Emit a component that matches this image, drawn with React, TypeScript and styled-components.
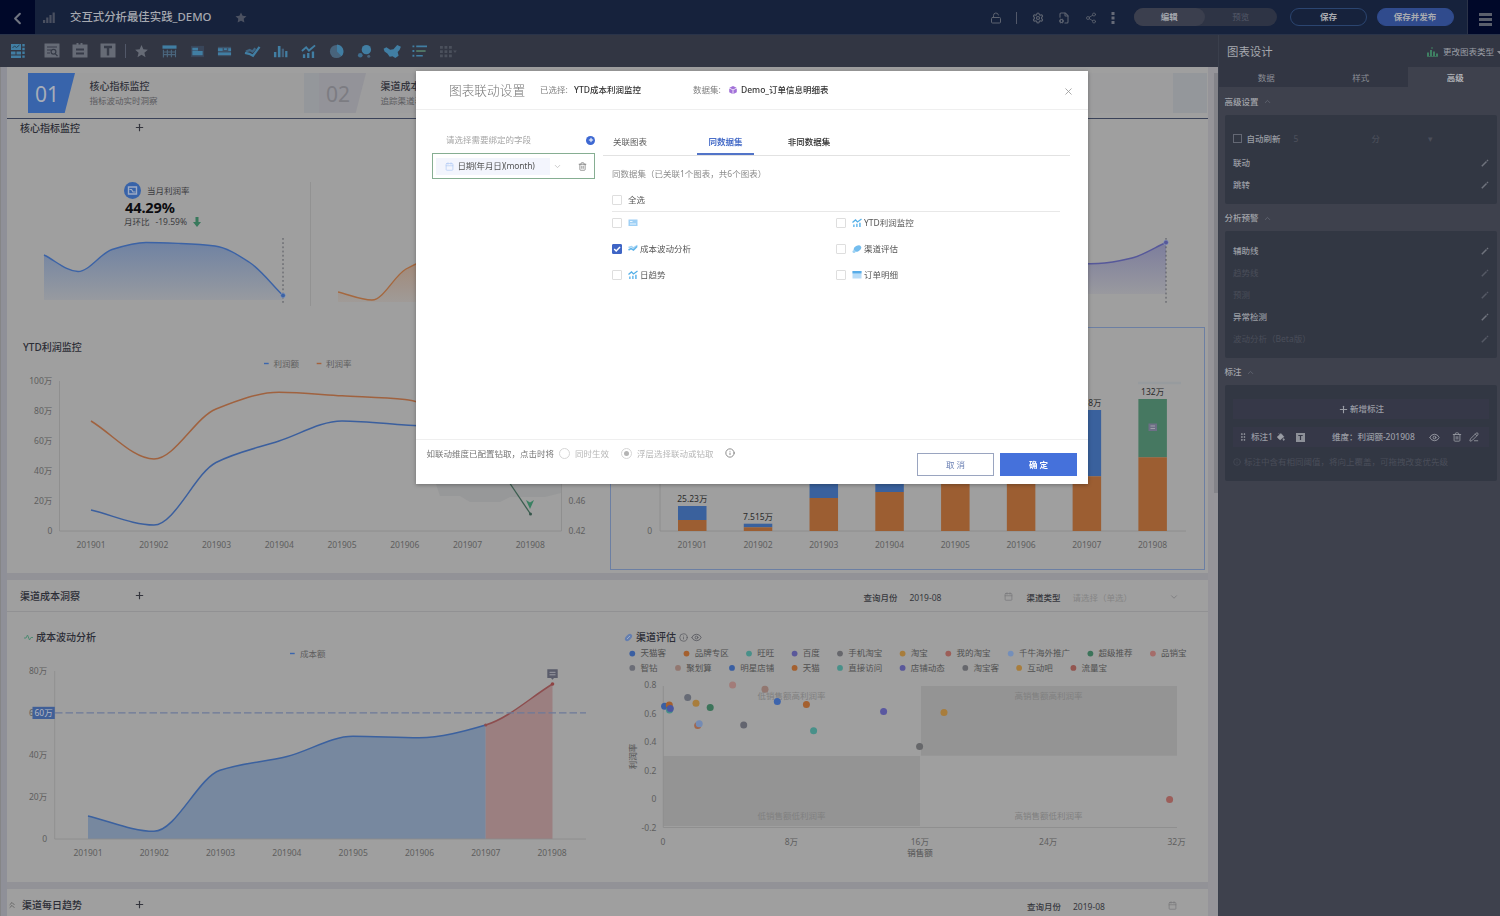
import React from "react";
import styled, { createGlobalStyle } from "styled-components";
import {
  Calendar,
  ChevronDown,
  ChevronLeft,
  ChevronUp,
  ChevronsUp,
  Eye,
  FileCog,
  GripVertical,
  Info,
  LockOpen,
  PaintBucket,
  PencilLine,
  Plus,
  Settings,
  Share2,
  Star,
  Trash2,
  X,
} from "lucide-react";

const FONT = '"Noto Sans", "Noto Sans CJK SC", sans-serif';

const Global = createGlobalStyle`
  * { box-sizing: border-box; }
  body { margin: 0; background: #3e414d; font-family: ${FONT}; overflow: hidden; }
  svg { display: block; flex: none; }
  svg text { font-family: ${FONT}; font-size: 8.5px; }
`;

const Shell = styled.div`
  display: flex;
  flex-direction: column;
  width: 1500px;
  height: 916px;
  overflow: hidden;
  font-size: 8.5px;
  line-height: 12px;
  white-space: nowrap;
`;

/* ---------- top bar ---------- */

const TopBar = styled.header`
  display: flex;
  align-items: center;
  height: 35px;
  background: #16223c;
  border-bottom: 1px solid #293349;
  color: #5d6370;
`;

const BackButton = styled.div`
  display: flex;
  align-items: center;
  justify-content: center;
  width: 35px;
  height: 34px;
  padding-top: 3px;
  background: #000829;
  color: #6f7480;
`;

const PageTitle = styled.div`
  margin-left: 14px;
  width: 165px;
  color: #a6a9b0;
  font-size: 11.4px;
  font-weight: 500;
`;

const TopIcons = styled.div`
  display: flex;
  align-items: center;
  margin-left: auto;
  width: 149px;
  justify-content: space-between;
  padding: 2px 18px 0 5px;
`;

const Bar = styled.span<{ $h: number }>`
  width: 1px;
  height: ${(p) => p.$h}px;
  background: #525869;
`;

const Toggle = styled.div`
  display: flex;
  width: 143px;
  height: 18px;
  border-radius: 9px;
  background: #2e3445;
`;

const ToggleItem = styled.div<{ $on?: boolean }>`
  flex: 1;
  border-radius: 9px;
  line-height: 18px;
  text-align: center;
  font-weight: ${(p) => (p.$on ? 600 : 400)};
  background: ${(p) => (p.$on ? "#3b3f4e" : "transparent")};
  color: ${(p) => (p.$on ? "#a5a8ae" : "#555a69")};
`;

const Pill = styled.div<{ $solid?: boolean; $gap: number }>`
  margin-left: ${(p) => p.$gap}px;
  width: 77px;
  height: 18px;
  line-height: 16px;
  border-radius: 9px;
  border: 1px solid ${(p) => (p.$solid ? "#304b8d" : "#2b4570")};
  background: ${(p) => (p.$solid ? "#304b8d" : "transparent")};
  color: #a9abb0;
  text-align: center;
  font-weight: 600;
`;

const MenuButton = styled.div`
  display: flex;
  flex-direction: column;
  justify-content: center;
  gap: 2px;
  margin-left: 13.5px;
  padding: 5px 0 0 11px;
  width: 33px;
  height: 34px;
  background: #000829;
  border-left: 1px solid #2b3348;
  i {
    width: 13px;
    height: 3px;
    background: #5a5f6c;
  }
`;

/* ---------- body ---------- */

const Body = styled.div`
  display: flex;
  flex: 1;
  min-height: 0;
`;

const Workspace = styled.div`
  width: 1219px;
  display: flex;
  flex-direction: column;
  border-right: 1px solid #3a3f4c;
`;

const Toolbar = styled.div`
  display: flex;
  align-items: center;
  height: 32px;
  background: #323643;
`;

const Tool = styled.div<{ $w?: number }>`
  display: flex;
  align-items: center;
  justify-content: center;
  width: ${(p) => p.$w ?? 27.85}px;
  height: 32px;
`;

const Canvas = styled.main`
  display: flex;
  flex: 1;
  min-height: 0;
  overflow: hidden;
  background: #929297;
`;

const Gutter = styled.div`
  width: 7px;
  background: #8f9098;
  border-left: 1px solid #858587;
`;

const Sheets = styled.div`
  width: 1201px;
  display: flex;
  flex-direction: column;
  gap: 7px;
`;

const ScrollTrack = styled.div`
  width: 10px;
  padding: 6px 0 0 6px;
  background: #959499;
`;

const ScrollThumb = styled.div`
  width: 4px;
  height: 420px;
  background: #838389;
`;

const Sheet = styled.section<{ $h: number }>`
  height: ${(p) => p.$h}px;
  flex: none;
  background: #9f9f9f;
`;

const NavStrip = styled.div`
  display: flex;
  height: 52px;
  padding: 6px 0 0 21px;
  border-bottom: 1px solid #3a4258;
`;

const NavCard = styled.div<{ $w: number; $tint?: boolean }>`
  display: flex;
  width: ${(p) => p.$w}px;
  height: 40px;
  background: ${(p) => (p.$tint ? "#9d9d9e" : "#9d9d9d")};
`;

const NavNumber = styled.div<{ $on?: boolean }>`
  width: 47px;
  height: 40px;
  padding-left: 7px;
  line-height: 42px;
  font-size: 21px;
  clip-path: polygon(0 0, 100% 0, 78% 100%, 0 100%);
  background: ${(p) => (p.$on ? "#3864ab" : "#939399")};
  color: ${(p) => (p.$on ? "#a7adb8" : "#7c7c82")};
`;

const NavText = styled.div`
  padding: 7px 0 0 14.5px;
  color: #5b5b5f;
  b {
    display: block;
    margin-bottom: 2px;
    font-size: 10px;
    font-weight: 500;
    line-height: 13px;
    color: #33343c;
  }
`;

const NavGap = styled.div<{ $w: number }>`
  width: ${(p) => p.$w}px;
  height: 40px;
  background: #94979b;
`;

const SheetHead = styled.div<{ $h: number; $line?: boolean; $pad?: number }>`
  display: flex;
  align-items: center;
  height: ${(p) => p.$h}px;
  padding-left: ${(p) => p.$pad ?? 13}px;
  border-bottom: 1px solid ${(p) => (p.$line ? "#919193" : "transparent")};
  color: #34353d;
`;

const Heading = styled.div<{ $w?: number }>`
  width: ${(p) => (p.$w ? p.$w + "px" : "auto")};
  font-size: 10px;
  font-weight: 500;
  color: #2c2d36;
`;

const FilterGroup = styled.div`
  display: flex;
  align-items: center;
  margin-left: auto;
  padding-top: 4px;
  color: #36373d;
  span {
    font-weight: 500;
  }
`;

const FilterValue = styled.div<{ $w: number; $dim?: boolean; $mr?: number }>`
  display: flex;
  justify-content: space-between;
  align-items: center;
  width: ${(p) => p.$w}px;
  margin: 0 ${(p) => p.$mr ?? 13}px 0 12px;
  color: ${(p) => (p.$dim ? "#858585" : "#36373d")};
  svg {
    margin-top: -2px;
    color: #7a7a7c;
  }
`;

const KpiRow = styled.div`
  display: flex;
  height: 190px;
  padding-left: 8px;
`;

const Kpi = styled.div`
  display: flex;
  flex-direction: column;
  width: 294.5px;
  padding: 45px 0 0 27px;
`;

const KpiInfo = styled.div`
  flex: none;
  height: 54px;
  padding-left: 82px;
  color: #3c3c40;
`;

const KpiLine = styled.div`
  display: flex;
  align-items: center;
  gap: 6px;
`;

const KpiValue = styled.div`
  padding-left: 1px;
  font-size: 14.6px;
  line-height: 17px;
  font-weight: 700;
  color: #0c0c10;
  letter-spacing: -0.15px;
`;

const ChartRow = styled.div`
  display: flex;
`;

const ChartCard = styled.div<{ $w: number; $h: number; $selected?: boolean; $ml?: number }>`
  width: ${(p) => p.$w}px;
  height: ${(p) => p.$h}px;
  margin-left: ${(p) => p.$ml ?? 0}px;
  border: 1px solid ${(p) => (p.$selected ? "#6c7fa3" : "transparent")};
`;

const CardTitle = styled.div<{ $pt: number; $pl?: number }>`
  display: flex;
  align-items: center;
  gap: 3px;
  height: ${(p) => p.$pt + 14}px;
  padding: ${(p) => p.$pt}px 0 0 ${(p) => p.$pl ?? 15}px;
  font-size: 10px;
  line-height: 12px;
  font-weight: 500;
  color: #2c2d36;
`;

/* ---------- right panel ---------- */

const Side = styled.aside`
  width: 281px;
  overflow: hidden;
  background: #3e414d;
  color: #9c9fa6;
`;

const SideHead = styled.div`
  display: flex;
  align-items: center;
  height: 32px;
  padding: 2px 0 0 8px;
  background: #323643;
  overflow: hidden;
`;

const SideTitle = styled.div`
  flex: none;
  width: 200px;
  font-size: 11.4px;
  color: #a7a9af;
`;

const SideTabs = styled.div`
  display: flex;
  height: 20px;
  background: #323643;
`;

const SideTab = styled.div<{ $on?: boolean }>`
  flex: none;
  width: 94.5px;
  padding-top: 1px;
  line-height: 19px;
  text-align: center;
  color: ${(p) => (p.$on ? "#adafb4" : "#8b8e96")};
  font-weight: ${(p) => (p.$on ? 600 : 400)};
  background: ${(p) => (p.$on ? "#3e414d" : "transparent")};
`;

const GroupTitle = styled.div<{ $h: number }>`
  display: flex;
  align-items: center;
  gap: 4px;
  height: ${(p) => p.$h}px;
  padding: 1px 0 0 5.5px;
  font-weight: 500;
  color: #a3a5ab;
  svg {
    color: #666a75;
  }
`;

const Group = styled.div<{ $h: number; $pt: number }>`
  height: ${(p) => p.$h}px;
  margin: 0 3px 0 5.5px;
  padding: ${(p) => p.$pt}px 8px 0 8.5px;
  background: #323743;
  border-radius: 2px;
`;

const Option = styled.div<{ $dim?: boolean; $h?: number }>`
  display: flex;
  align-items: center;
  height: ${(p) => p.$h ?? 22}px;
  color: ${(p) => (p.$dim ? "#4a4e5a" : "#9a9da4")};
  font-weight: ${(p) => (p.$dim ? 400 : 500)};
  svg {
    margin-left: auto;
    color: ${(p) => (p.$dim ? "#555965" : "#6f737d")};
  }
`;

const DarkBox = styled.span`
  width: 9px;
  height: 9px;
  margin-right: 4.5px;
  border: 1px solid #646874;
`;

const Faint = styled.span<{ $ml: number }>`
  margin-left: ${(p) => p.$ml}px;
  color: #4a4e5a;
`;

const AddNote = styled.div`
  display: flex;
  align-items: center;
  justify-content: center;
  gap: 1px;
  height: 20px;
  background: #363848;
  color: #9a9da5;
  font-weight: 500;
`;

const NoteRow = styled.div`
  display: flex;
  align-items: center;
  height: 20px;
  margin-top: 8px;
  padding-left: 5px;
  background: #363848;
  color: #9a9da5;
  font-weight: 500;
`;

const Space = styled.span<{ $w: number }>`
  flex: none;
  width: ${(p) => p.$w}px;
`;

const Hint = styled.div`
  display: flex;
  align-items: center;
  gap: 3px;
  margin-top: 9px;
  color: #4a4e5a;
`;

/* ---------- dialog ---------- */

const Dialog = styled.div`
  position: fixed;
  left: 416px;
  top: 71px;
  width: 672px;
  height: 413px;
  display: flex;
  flex-direction: column;
  background: #fff;
  box-shadow: 0 1px 4px rgba(0, 0, 0, 0.3);
  font-size: 8.5px;
  line-height: 12px;
  white-space: nowrap;
  color: #6a6a6a;
`;

const DialogHead = styled.div`
  display: flex;
  align-items: center;
  height: 39px;
  padding-left: 33px;
  border-bottom: 1px solid #efefef;
`;

const DialogTitle = styled.h1`
  margin: 0;
  width: 91px;
  font-size: 12.7px;
  font-weight: 300;
  color: #777;
`;

const Strong = styled.span<{ $w?: number }>`
  width: ${(p) => (p.$w ? p.$w + "px" : "auto")};
  color: #333;
  font-weight: 500;
`;

const Label = styled.span<{ $w: number }>`
  width: ${(p) => p.$w}px;
  color: #808080;
`;

const DialogBody = styled.div`
  display: flex;
  flex: 1;
  padding: 22px 18px 0 16px;
`;

const Fields = styled.div`
  width: 163px;
  margin-right: 8px;
`;

const FieldsHead = styled.div`
  display: flex;
  align-items: center;
  justify-content: space-between;
  height: 16px;
  padding-left: 14px;
  margin-bottom: 5px;
  color: #a6a6a6;
`;

const AddDot = styled.div`
  display: flex;
  align-items: center;
  justify-content: center;
  width: 9px;
  height: 9px;
  border-radius: 50%;
  background: #3d68d2;
  color: #fff;
`;

const Field = styled.div`
  display: flex;
  align-items: center;
  height: 26px;
  padding-left: 3px;
  border: 1px solid #86ae92;
  color: #999;
`;

const FieldPill = styled.div`
  display: flex;
  align-items: center;
  gap: 4px;
  width: 114px;
  height: 17px;
  padding-left: 8.5px;
  margin-right: 3px;
  background: #f3f5fd;
  color: #555;
  letter-spacing: -0.15px;
`;

const Picker = styled.div`
  flex: 1;
`;

const Tabs = styled.div`
  display: flex;
  height: 24px;
  border-bottom: 1px solid #e2e2e2;
`;

const Tab = styled.div<{ $w: number; $on?: boolean; $ml: number; $dark?: boolean }>`
  width: ${(p) => p.$w}px;
  height: 23px;
  margin-left: ${(p) => p.$ml}px;
  padding-top: 4px;
  text-align: center;
  font-weight: ${(p) => (p.$on ? 700 : p.$dark ? 500 : 400)};
  color: ${(p) => (p.$on ? "#4a6fc9" : p.$dark ? "#2b2b2b" : "#5c5c5c")};
  border-bottom: ${(p) => (p.$on ? "2px solid #5274c8" : "none")};
`;

const Summary = styled.div`
  padding: 12px 0 0 9px;
  height: 33px;
  color: #8c8c8c;
`;

const AllRow = styled.div`
  margin: 0 10px 0 9px;
  height: 23px;
  border-bottom: 1px solid #e8e8e8;
`;

const Options = styled.div`
  display: grid;
  grid-template-columns: 224px 224px;
  grid-auto-rows: 26.3px;
  margin-left: 9px;
  margin-top: -2px;
`;

const Choice = styled.label<{ $h?: number }>`
  display: flex;
  align-items: center;
  height: ${(p) => p.$h ?? 25}px;
  color: #565656;
  svg {
    margin-right: 2px;
  }
`;

const Check = styled.span<{ $on?: boolean }>`
  display: flex;
  align-items: center;
  justify-content: center;
  width: 10px;
  height: 10px;
  margin-right: 6px;
  border: 1px solid ${(p) => (p.$on ? "#3f65c5" : "#dedede")};
  border-radius: 1px;
  background: ${(p) => (p.$on ? "#3f65c5" : "#fff")};
  svg {
    margin: 0;
  }
`;

const DialogFoot = styled.div`
  display: flex;
  align-items: flex-start;
  height: 45px;
  padding: 8px 11px 0 10.5px;
  border-top: 1px solid #efefef;
  color: #747474;
`;

const Radio = styled.span<{ $on?: boolean; $ml: number }>`
  display: flex;
  align-items: center;
  justify-content: center;
  width: 11px;
  height: 11px;
  margin: 0 5.5px 0 ${(p) => p.$ml}px;
  border: 1px solid #d6d6d6;
  border-radius: 50%;
  &::after {
    content: "";
    width: 5px;
    height: 5px;
    border-radius: 50%;
    background: ${(p) => (p.$on ? "#b4b4b4" : "transparent")};
  }
`;

const Muted = styled.span`
  margin-right: 11px;
  color: #b6b6b6;
`;

const Button = styled.div<{ $primary?: boolean }>`
  width: 77px;
  height: 23px;
  margin: 5px 0 0 ${(p) => (p.$primary ? "6px" : "auto")};
  line-height: 22px;
  border: 1px solid ${(p) => (p.$primary ? "#4571db" : "#9aa5c0")};
  background: ${(p) => (p.$primary ? "#4571db" : "#fff")};
  color: ${(p) => (p.$primary ? "#fff" : "#6b80b4")};
  font-weight: ${(p) => (p.$primary ? 700 : 400)};
  text-align: center;
`;

/* ---------- drawing helpers ---------- */

type Pt = [number, number];

// Monotone cubic interpolation through the points.
function curve(pts: Pt[]): string {
  const n = pts.length;
  const d: number[] = [];
  for (let i = 0; i < n - 1; i++) d.push((pts[i + 1][1] - pts[i][1]) / (pts[i + 1][0] - pts[i][0]));
  const m = pts.map((_, i) => {
    if (i === 0) return d[0];
    if (i === n - 1) return d[n - 2];
    return d[i - 1] * d[i] <= 0 ? 0 : (2 * d[i - 1] * d[i]) / (d[i - 1] + d[i]);
  });
  let s = `M${pts[0][0]} ${pts[0][1]}`;
  for (let i = 0; i < n - 1; i++) {
    const h = (pts[i + 1][0] - pts[i][0]) / 3;
    s += `C${pts[i][0] + h} ${pts[i][1] + m[i] * h} ${pts[i + 1][0] - h} ${pts[i + 1][1] - m[i + 1] * h} ${pts[i + 1][0]} ${pts[i + 1][1]}`;
  }
  return s;
}

const area = (pts: Pt[], base: number) => `${curve(pts)}L${pts[pts.length - 1][0]} ${base}L${pts[0][0]} ${base}Z`;

const MONTHS = ["201901", "201902", "201903", "201904", "201905", "201906", "201907", "201908"];
const AXIS = "#8b8b8b";
const LABEL = "#5e5e5e";

function Spark({ pts, color, id, base, line }: { pts: Pt[]; color: string; id: string; base: number; line?: boolean }) {
  const end = pts[pts.length - 1];
  return (
    <svg width="245" height="72" viewBox="0 0 245 72">
      <defs>
        <linearGradient id={id} x1="0" y1="0" x2="0" y2="1">
          <stop offset="0" stopColor={color} stopOpacity="0.48" />
          <stop offset="1" stopColor={color} stopOpacity="0.08" />
        </linearGradient>
      </defs>
      <path d={area(pts, base)} fill={`url(#${id})`} />
      <path d={curve(pts)} fill="none" stroke={color} strokeWidth="1.4" />
      {line && <path d={`M${end[0]} 2V69`} stroke="#55575e" strokeDasharray="1.8 2.4" />}
      {line && <circle cx={end[0]} cy={end[1]} r="2.4" fill={color} stroke="#8fa0bd" strokeWidth="0.6" />}
    </svg>
  );
}

function ProfitChart() {
  const rate: Pt[] = [[91, 421], [154, 459], [216, 409], [279, 392.3], [342, 395.8], [405, 399.5], [467, 420]];
  const sum: Pt[] = [[91, 510], [154, 525], [216, 462.5], [279, 441], [342, 421], [405, 425], [467, 430], [530, 440]];
  return (
    <svg width="588" height="212" viewBox="16 354 588 212">
      <path d="M264 363.5h4.7" stroke="#3b66ad" strokeWidth="1.4" />
      <text x="273.5" y="366.5" fill={LABEL}>利润额</text>
      <path d="M316.7 363.5h4.7" stroke="#a5623c" strokeWidth="1.4" />
      <text x="326" y="366.5" fill={LABEL}>利润率</text>
      {["100万", "80万", "60万", "40万", "20万", "0"].map((t, i) => (
        <text key={t} x="52.3" y={383.8 + i * 30.1} textAnchor="end" fill={LABEL}>{t}</text>
      ))}
      {MONTHS.map((t, i) => (
        <text key={t} x={91 + i * 62.75} y="548.3" textAnchor="middle" fill={LABEL}>{t}</text>
      ))}
      <path d="M59.5 381V531H561.5V400" fill="none" stroke={AXIS} strokeWidth="0.8" />
      <path d={curve(rate)} fill="none" stroke="#a0623f" strokeWidth="1.5" />
      <path d={curve(sum)} fill="none" stroke="#3b5f9e" strokeWidth="1.5" />
      <path d="M436 484H561V493L545 497H510L500 502H470L460 496H440Z" fill="#979899" />
      <path d="M509 482L530.5 514" stroke="#3b5e4f" strokeWidth="1.3" />
      <circle cx="530.5" cy="514" r="1.5" fill="#35554a" />
      <path d="M526 500L530 502.5L534 500L530 509Z" fill="#3a8062" />
      <text x="568.5" y="503.5" fill={LABEL}>0.46</text>
      <text x="568.5" y="534" fill={LABEL}>0.42</text>
    </svg>
  );
}

function CostBars() {
  const blue = "#3a619d";
  const orange = "#9c5e32";
  // [top of the stack, boundary to the lower series]
  const bars: Pt[] = [[506, 520], [523.7, 527.3], [470, 498], [440, 492], [430, 484], [425, 480], [410, 476.3], [399, 457.3]];
  return (
    <svg width="592" height="222" viewBox="611 346 592 222">
      <path d="M660 400V531H1186" fill="none" stroke={AXIS} strokeWidth="0.8" />
      <path d="M1138 383H1181" stroke="#979b9e" strokeWidth="2.5" />
      {bars.map(([top, mid], i) => {
        const x = 678 + i * 65.77;
        return (
          <g key={i}>
            <rect x={x} y={top} width="28.5" height={mid - top} fill={i === 7 ? "#467861" : blue} />
            <rect x={x} y={mid} width="28.5" height={531 - mid} fill={orange} />
            <text x={x + 14.2} y="548.3" textAnchor="middle" fill={LABEL}>{MONTHS[i]}</text>
          </g>
        );
      })}
      <text x="652" y="534" textAnchor="end" fill={LABEL}>0</text>
      <text x="692.3" y="502" textAnchor="middle" fill="#2b2b2b">25.23万</text>
      <text x="758" y="520" textAnchor="middle" fill="#2b2b2b">7.515万</text>
      <text x="1101.5" y="406" textAnchor="end" fill="#2b2b2b">118万</text>
      <text x="1152.6" y="395" textAnchor="middle" fill="#2b2b2b">132万</text>
      <rect x="1148.5" y="423.5" width="8.5" height="7.5" fill="#6d6f86" />
      <path d="M1150.5 426h4.5M1150.5 428.5h4.5" stroke="#a5a5ad" strokeWidth="0.9" />
    </svg>
  );
}

function FluctuationChart() {
  const pts: Pt[] = [[88, 817], [154, 832.3], [220, 771.3], [287, 757.5], [353, 737.3], [419, 738.8], [485.7, 726], [552.5, 685]];
  return (
    <svg width="590" height="230" viewBox="16 645 590 230">
      <path d="M290 654.5h4.7" stroke="#3b66ad" strokeWidth="1.4" />
      <text x="300" y="657.7" fill={LABEL}>成本额</text>
      {["80万", "60万", "40万", "20万", "0"].map((t, i) => (
        <text key={t} x="47.2" y={674.7 + i * 42.1} textAnchor="end" fill={LABEL}>{t}</text>
      ))}
      {MONTHS.map((t, i) => (
        <text key={t} x={88 + i * 66.3} y="857.2" textAnchor="middle" fill={LABEL}>{t}</text>
      ))}
      <clipPath id="calm"><rect x="80" y="670" width="405.7" height="172" /></clipPath>
      <clipPath id="surge"><rect x="485.7" y="670" width="70" height="172" /></clipPath>
      <g clipPath="url(#calm)">
        <path d={area(pts, 840)} fill="#77889f" />
        <path d={curve(pts)} fill="none" stroke="#3b619f" strokeWidth="1.5" />
      </g>
      <g clipPath="url(#surge)">
        <path d={area(pts, 840)} fill="#9b7f80" />
        <path d={curve(pts)} fill="none" stroke="#8d4e4f" strokeWidth="1.5" />
      </g>
      <path d="M54.7 672V840H586" fill="none" stroke={AXIS} strokeWidth="0.8" />
      <path d="M55 713.8H586" stroke="#6d7a99" strokeWidth="1.2" strokeDasharray="7.5 3" />
      <rect x="32.5" y="707.8" width="22.3" height="12.2" fill="#405f97" />
      <text x="43.6" y="717" textAnchor="middle" fill="#b3b8c2">60万</text>
      <circle cx="485.7" cy="726" r="1.6" fill="#8f4d4d" />
      <circle cx="552.5" cy="685" r="1.8" fill="#8f4444" />
      <path d="M547.3 670.3h10.4v8.6h-3.7l-1.5 1.8l-1.5-1.8h-3.7z" fill="#5a5c6b" />
      <path d="M549.5 673.3h6M549.5 675.8h6" stroke="#a3a3aa" strokeWidth="0.9" />
    </svg>
  );
}

const LEGEND: [number, string, string][][] = [
  [
    [632.3, "天猫客", "#3a5fa2"], [686.5, "品牌专区", "#a4602f"], [749, "旺旺", "#489089"], [794.6, "百度", "#5a589a"],
    [840, "手机淘宝", "#66676c"], [902.6, "淘宝", "#a87d3c"], [948.3, "我的淘宝", "#9c5e58"], [1010.7, "千牛海外推广", "#748fba"],
    [1090.4, "超级推荐", "#3c745a"], [1152.9, "品销宝", "#a56d6a"],
  ],
  [
    [632.3, "智钻", "#6b6d77"], [678, "聚划算", "#927770"], [732, "明星店铺", "#3a5fa2"], [794.6, "天猫", "#a4602f"],
    [840, "直接访问", "#489089"], [902.6, "店铺动态", "#5a589a"], [965.3, "淘宝客", "#66676c"], [1019.1, "互动吧", "#a87d3c"],
    [1073.4, "流量宝", "#935650"],
  ],
];

const DOTS: [number, number, string][] = [
  [664.6, 707.2, "#3a5fa2"], [669.3, 706, "#a4602f"], [669.5, 711, "#489089"], [670.3, 709.5, "#4a57a0"], [687.7, 698.5, "#676b76"],
  [696, 704.3, "#a87d3c"], [710.2, 708.4, "#3c745a"], [732.6, 686, "#a27c79"], [765, 690.2, "#927770"],
  [777.3, 702.4, "#3d64ac"], [806.4, 705.6, "#a4602f"], [883.6, 712.6, "#5a58a0"], [813.6, 731.7, "#489089"],
  [743.7, 726, "#63656f"], [697.7, 726.5, "#a2664a"], [699.2, 724.7, "#748bb4"], [919.6, 747.4, "#66676a"],
  [944, 713.5, "#a87d3c"], [1169.6, 800.6, "#9c5e5a"],
];

function ChannelScatter() {
  return (
    <svg width="590" height="230" viewBox="612 645 590 230">
      {LEGEND.map((row, r) =>
        row.map(([x, name, color]) => (
          <g key={r + name}>
            <circle cx={x} cy={654.6 + r * 14.3} r="2.9" fill={color} />
            <text x={x + 8.2} y={657.4 + r * 14.3} fill="#505050">{name}</text>
          </g>
        ))
      )}
      <rect x="663.5" y="757" width="256.5" height="70" fill="#949494" />
      <rect x="921" y="687" width="256" height="69.7" fill="#949494" />
      <path d="M663.3 687V828.5H1177" fill="none" stroke={AXIS} strokeWidth="0.8" />
      {["0.8", "0.6", "0.4", "0.2", "0", "-0.2"].map((t, i) => (
        <text key={t} x="656.3" y={689 + i * 28.5} textAnchor="end" fill={LABEL}>{t}</text>
      ))}
      {["0", "8万", "16万", "24万", "32万"].map((t, i) => (
        <text key={t} x={663 + i * 128.4} y="846" textAnchor="middle" fill={LABEL}>{t}</text>
      ))}
      <text x="920" y="857.3" textAnchor="middle" fill={LABEL} fontWeight="500">销售额</text>
      <text transform="translate(636.3 757.5) rotate(-90)" textAnchor="middle" fill={LABEL} fontWeight="500">利润率</text>
      <g fill="#808080" textAnchor="middle">
        <text x="791.5" y="700.2">低销售额高利润率</text>
        <text x="1048.5" y="700.2">高销售额高利润率</text>
        <text x="791.5" y="820.2">低销售额低利润率</text>
        <text x="1048.5" y="820.2">高销售额低利润率</text>
      </g>
      {DOTS.map(([x, y, c], i) => (
        <circle key={i} cx={x} cy={y} r="3.5" fill={c} />
      ))}
    </svg>
  );
}

const B = "#417ea3";
const G = "#666b76";

const toolIcons: React.ReactNode[] = [
  <path key="star" d="M8 1l2 4.6 4.8.4-3.7 3.2 1.2 4.8L8 11.400l-4.300 2.600 1.200-4.800L1.200 6 6 5.600z" fill={G} />,
  <g key="table"><path d="M0.500 1.500h15v3.500h-15z" fill={B} /><path d="M1.500 6v8.500M5.700 6v8M10 6v8M14.400 6v8M1.500 8.500h13M1.500 11.300h13" stroke="#4a667e" strokeWidth="1.200" fill="none" /></g>,
  <g key="card"><path d="M1 2h14v12H1z" fill="#39465a" /><path d="M2.500 4h6v3h-6zM2.500 7.500h11V12h-11z" fill={B} /></g>,
  <g key="kpi"><path d="M1 3h14v10H1z" fill="#3d5066" /><path d="M1 4.500h5v3H1zM7.500 4.500h3v2h-3zM12 4.500h3v3h-3zM1 9h14v2.600H1z" fill={B} /></g>,
  <g key="line" fill="none" strokeWidth="2.400"><path d="M1 8l4-1.500L8 8l3-3.500" stroke="#3f6583" /><path d="M0 9.500l4.500 1 4 2L15.500 3" stroke={B} /></g>,
  <g key="bar"><path d="M1 8.500h2.600V14H1zM5.200 2h2.800v12H5.200zM13 7.500h2.400V14H13z" fill={B} /><path d="M9.300 5h2.400v9H9.300z" fill="#44607a" /></g>,
  <g key="combo"><path d="M1 7.500L5.500 3.500l3 3.500L15 1.500" fill="none" stroke={B} strokeWidth="2" /><path d="M2 11h2.500v4H2zM6.500 9.500H9V15H6.500zM11.500 8H14v7h-2.500z" fill={B} /></g>,
  <g key="pie"><circle cx="8" cy="8" r="7" fill="#48647c" /><path d="M8.500 0.500a7.500 7.500 0 0 1 5 12.500L8.500 8z" fill={B} /></g>,
  <g key="bubble"><circle cx="10" cy="6" r="5" fill={B} /><circle cx="3.500" cy="12" r="2.500" fill="#3f6d8e" /><circle cx="12.500" cy="13" r="1.600" fill="#48647c" /></g>,
  <g key="map"><path d="M-1.500 5l3-1.500 4 2.500 3.500-.5L13 1l4 2-1.500 3.500-2 2 1 4-3.500 2.500-3-2-3 .5L2.500 10-.500 8z" fill={B} /></g>,
  <g key="list"><path d="M0.500 2.500h2M0.500 7.500h2M0.500 12.500h2" stroke={B} strokeWidth="2" /><path d="M4.500 2.500h11.500M4.500 12.500h7" stroke={B} strokeWidth="1.800" /><path d="M4.500 7.500h10" stroke="#557f6c" strokeWidth="1.800" /></g>,
  <g key="more" fill="#4b505c"><path d="M0 2h3v3H0zM4.800 2h3v3h-3zM9.600 2h3v3h-3zM0 6.600h3v3H0zM4.800 6.600h3v3h-3zM9.600 6.600h3v3h-3zM0 11.200h3v3H0zM4.800 11.200h3v3h-3zM9.600 11.200h3v3h-3zM14 7h4l-2 2.500z" /></g>,
];

const chartGlyphs: Record<string, React.ReactNode> = {
  card: <g><rect x="0.500" y="1.500" width="9" height="6.500" fill="#9fd0f5" /><path d="M2 3.500h2.500M2 6h6" stroke="#e9f6ff" /></g>,
  line: <g fill="none" strokeWidth="1.500"><path d="M0.500 3.500l3-1 2 1.500L9.500 1.500" stroke="#a5d3f3" /><path d="M0.500 6l2.500-1.500 2.500 1.500L9 2.500" stroke="#5fb4ea" /></g>,
  combo: <g><path d="M0.500 4.500L3.500 2l2 2L9.500 1" stroke="#55b0e8" strokeWidth="1.300" fill="none" /><path d="M1 6.500h1.700V9H1zM4 5.800h1.700V9H4zM7 4.800h1.800V9H7z" fill="#79c1ee" /></g>,
  scatter: <g><ellipse cx="5.500" cy="4.500" rx="4" ry="2.800" transform="rotate(-30 5.500 4.500)" fill="#74bdee" /><circle cx="2" cy="7.500" r="1.500" fill="#9ed2f4" /></g>,
  table: <g><rect x="0.500" y="1" width="9" height="7.500" fill="#b7dcf8" /><path d="M0.500 1h9v2.400h-9z" fill="#57ace8" /></g>,
};

const Glyph = ({ kind }: { kind: string }) => (
  <svg width="10" height="10" viewBox="0 0 10 10">{chartGlyphs[kind]}</svg>
);

const CHOICES: { name: string; kind: string; on?: boolean }[] = [
  { name: "", kind: "card" },
  { name: "YTD利润监控", kind: "combo" },
  { name: "成本波动分析", kind: "line", on: true },
  { name: "渠道评估", kind: "scatter" },
  { name: "日趋势", kind: "combo" },
  { name: "订单明细", kind: "table" },
];

const Edit = () => (
  <svg width="8" height="8" viewBox="0 0 8 8">
    <path d="M0.800 7.200L5.500 2.500M6 2L7 1" stroke="currentColor" strokeWidth="1.500" fill="none" />
  </svg>
);

/* ---------- page parts ---------- */

function Header() {
  return (
    <TopBar>
      <BackButton><ChevronLeft size={19} strokeWidth={2.600} /></BackButton>
      <svg width="21" height="14" viewBox="0 0 21 14">
        <path d="M8 10h2.200v3H8zM11.200 7.500h2.200V13h-2.200zM14.400 5h2.200v8h-2.200zM17.600 2.500h2.200V13h-2.200z" fill="#4a5060" />
      </svg>
      <PageTitle>交互式分析最佳实践_DEMO</PageTitle>
      <svg width="12" height="14" viewBox="0 0 12 14">
        <path d="M6 2.500l1.600 3.300 3.900.4-2.800 2.600.7 3.700L6 10.700l-3.400 1.800.7-3.700L.500 6.200l3.900-.4z" fill="#4b5161" />
      </svg>
      <TopIcons>
        <LockOpen size={12} strokeWidth={2} />
        <Bar $h={12} />
        <Settings size={12} strokeWidth={2.400} />
        <FileCog size={12} strokeWidth={2.200} />
        <Share2 size={12} strokeWidth={1.600} />
        <svg width="4" height="12" viewBox="0 0 4 12"><path d="M0.500 0h3v3h-3zM0.500 4.500h3v3h-3zM0.500 9h3v3h-3z" fill="#666b78" /></svg>
      </TopIcons>
      <Toggle>
        <ToggleItem $on>编辑</ToggleItem>
        <ToggleItem>预览</ToggleItem>
      </Toggle>
      <Pill $gap={13.500}>保存</Pill>
      <Pill $gap={9.500} $solid>保存并发布</Pill>
      <MenuButton><i /><i /><i /></MenuButton>
    </TopBar>
  );
}

function Tools() {
  return (
    <Toolbar>
      <Tool $w={36}>
        <svg width="16" height="16" viewBox="0 0 16 16">
          <path d="M1 1h10v6H1zM1 8.500h4.500v3H1zM6.500 8.500H11v3H6.500zM1 12.500h10V15H1z" fill={B} />
          <path d="M2.500 5l2-2 2 1.500L9.500 2" stroke="#2b4356" fill="none" />
          <path d="M13.500 1v14" stroke={B} strokeWidth="2.400" strokeDasharray="2.400 1.400" />
        </svg>
      </Tool>
      <Tool $w={32}>
        <svg width="16" height="16" viewBox="0 0 16 16">
          <path d="M0.500 0.500h15v14h-15z" fill={G} />
          <path d="M3 4h10M3 7h4M3 10h3" stroke="#363b48" strokeWidth="1.200" />
          <circle cx="9.500" cy="8.800" r="2.400" fill="none" stroke="#363b48" strokeWidth="1.200" />
          <path d="M11.300 10.800l2.200 2.200" stroke="#363b48" strokeWidth="1.200" />
        </svg>
      </Tool>
      <Tool $w={24}>
        <svg width="16" height="16" viewBox="0 0 16 16">
          <path d="M0.500 1.500h4V0h2v1.500h2V0h2v1.500h5V14.500h-15z" fill={G} />
          <path d="M4 6.500h8M4 10.500h8" stroke="#363b48" strokeWidth="1.800" />
        </svg>
      </Tool>
      <Tool $w={31}>
        <svg width="16" height="16" viewBox="0 0 16 16">
          <path d="M0.500 0.500h15v14h-15z" fill={G} />
          <path d="M4 4h8M8 4v8.500" stroke="#363b48" strokeWidth="2.400" />
        </svg>
      </Tool>
      <Space $w={2} />
      <Bar $h={14} />
      <Space $w={1.500} />
      {toolIcons.map((icon, i) => (
        <Tool key={i}>
          <svg width="15" height="15" viewBox="0 0 16 16" overflow="visible">{icon}</svg>
        </Tool>
      ))}
    </Toolbar>
  );
}

function Dashboard() {
  return (
    <Canvas>
      <Gutter />
      <Sheets>
        <Sheet $h={506}>
          <NavStrip>
            <NavCard $w={276}>
              <NavNumber $on>01</NavNumber>
              <NavText><b>核心指标监控</b>指标波动实时洞察</NavText>
            </NavCard>
            <NavGap $w={15} />
            <NavCard $w={854} $tint>
              <NavNumber>02</NavNumber>
              <NavText><b>渠道成本洞察</b>追踪渠道表现</NavText>
            </NavCard>
            <NavGap $w={34} />
          </NavStrip>
          <SheetHead $h={18}>
            <Heading $w={114}>核心指标监控</Heading>
            <Plus size={11} strokeWidth={2.500} />
          </SheetHead>
          <KpiRow>
            <Kpi>
              <KpiInfo>
                <KpiLine>
                  <svg width="17" height="17" viewBox="0 0 17 17">
                    <circle cx="8.500" cy="8.500" r="8.500" fill="#3863a9" />
                    <path d="M4.500 5h8v7h-8z" fill="none" stroke="#9dabc4" strokeWidth="1.400" />
                    <path d="M5.500 7.500l2 0 1.500 2.500h2.500" stroke="#9dabc4" fill="none" strokeWidth="1.200" />
                  </svg>
                  当月利润率
                </KpiLine>
                <KpiValue>44.29%</KpiValue>
                <KpiLine>
                  <span>月环比</span>
                  <span>-19.59%</span>
                  <svg width="8" height="10" viewBox="0 0 8 10"><path d="M2.500 0h3v5H8L4 10 0 5h2.500z" fill="#38795c" /></svg>
                </KpiLine>
              </KpiInfo>
              <Spark
                id="k1"
                color="#3c63a6"
                base={64}
                line
                pts={[[2, 19], [36, 35.500], [70, 13.500], [104, 6.500], [139, 7.500], [173, 10], [207, 26], [241, 59.500]]}
              />
            </Kpi>
            <svg width="1" height="190" viewBox="0 0 1 190"><path d="M0.500 45V169" stroke="#929292" /></svg>
            <Kpi>
              <KpiInfo />
              <Spark id="k2" color="#a5683f" base={66} pts={[[0, 56], [34, 64], [68, 33], [102, 20], [136, 16], [171, 18], [205, 20], [240, 30]]} />
            </Kpi>
            <Kpi />
            <Kpi>
              <KpiInfo />
              <Spark
                id="k4"
                color="#56589a"
                base={58}
                line
                pts={[[0, 40], [34, 46], [69, 34], [103, 30], [137, 28], [171, 27.500], [205, 22], [239, 6.500]]}
              />
            </Kpi>
          </KpiRow>
          <ChartRow>
            <ChartCard $w={590} $h={243} $ml={8}>
              <CardTitle $pt={12} $pl={7}>YTD利润监控</CardTitle>
              <ProfitChart />
            </ChartCard>
            <ChartCard $w={595} $h={243} $ml={5} $selected>
              <CardTitle $pt={4} />
              <CostBars />
            </ChartCard>
          </ChartRow>
        </Sheet>

        <Sheet $h={302}>
          <SheetHead $h={32} $line>
            <Heading $w={114}>渠道成本洞察</Heading>
            <Plus size={11} strokeWidth={2.500} />
            <FilterGroup>
              <span>查询月份</span>
              <FilterValue $w={104}>2019-08<Calendar size={9} /></FilterValue>
              <span>渠道类型</span>
              <FilterValue $w={106} $dim $mr={29.500}>请选择（单选）<ChevronDown size={10} /></FilterValue>
            </FilterGroup>
          </SheetHead>
          <ChartRow>
            <ChartCard $w={596} $h={268} $ml={8}>
              <CardTitle $pt={17} $pl={8}>
                <svg width="9" height="9" viewBox="0 0 9 9"><path d="M0 5h2l1.500-3L5.500 7 7 4.500h2" fill="none" stroke="#4f8b72" /></svg>
                成本波动分析
              </CardTitle>
              <FluctuationChart />
            </ChartCard>
            <ChartCard $w={596} $h={268}>
              <CardTitle $pt={17} $pl={12}>
                <svg width="9" height="9" viewBox="0 0 9 9">
                  <ellipse cx="4.500" cy="4.500" rx="4.300" ry="2.600" transform="rotate(-45 4.500 4.500)" fill="#657fb0" />
                  <path d="M3 6L6 3" stroke="#9caccb" />
                </svg>
                渠道评估
                <Info size={9} color="#5b5c62" />
                <Eye size={11} color="#5b5c62" />
              </CardTitle>
              <ChannelScatter />
            </ChartCard>
          </ChartRow>
        </Sheet>

        <Sheet $h={40}>
          <SheetHead $h={32} $pad={0}>
            <ChevronsUp size={10} color="#5c5c5c" />
            <Space $w={5} />
            <Heading $w={112}>渠道每日趋势</Heading>
            <Plus size={11} strokeWidth={2.500} />
            <FilterGroup>
              <span>查询月份</span>
              <FilterValue $w={104} $mr={31}>2019-08<Calendar size={9} /></FilterValue>
            </FilterGroup>
          </SheetHead>
        </Sheet>
      </Sheets>
      <ScrollTrack><ScrollThumb /></ScrollTrack>
    </Canvas>
  );
}

function DesignPanel() {
  const alerts: [string, boolean][] = [
    ["辅助线", false], ["趋势线", true], ["预测", true], ["异常检测", false], ["波动分析（Beta版）", true],
  ];
  return (
    <Side>
      <SideHead>
        <SideTitle>图表设计</SideTitle>
        <svg width="11" height="10" viewBox="0 0 11 10">
          <path d="M0 5.500h2V9H0zM3 3h2v6H3zM6 4.500h2V9H6zM9 6.500h2V9H9zM0 9.200h11v.8H0zM4.500 0h1v2h-1z" fill="#3f8063" />
        </svg>
        <Space $w={5} />
        更改图表类型
        <Space $w={3} />
        <svg width="5" height="3" viewBox="0 0 5 3"><path d="M0 0h5L2.500 3z" fill="#8b8e96" /></svg>
      </SideHead>
      <SideTabs>
        <SideTab>数据</SideTab>
        <SideTab>样式</SideTab>
        <SideTab $on>高级</SideTab>
      </SideTabs>
      <GroupTitle $h={28}>高级设置<ChevronUp size={9} /></GroupTitle>
      <Group $h={89} $pt={10}>
        <Option $h={27}>
          <DarkBox />自动刷新
          <Faint $ml={13}>5</Faint>
          <Faint $ml={73}>分</Faint>
          <Faint $ml={48}>▾</Faint>
        </Option>
        <Option>联动<Edit /></Option>
        <Option>跳转<Edit /></Option>
      </Group>
      <GroupTitle $h={27}>分析预警<ChevronUp size={9} /></GroupTitle>
      <Group $h={127} $pt={9}>
        {alerts.map(([name, dim]) => (
          <Option key={name} $dim={dim}>{name}<Edit /></Option>
        ))}
      </Group>
      <GroupTitle $h={27}>标注<ChevronUp size={9} /></GroupTitle>
      <Group $h={96} $pt={14}>
        <AddNote><Plus size={11} strokeWidth={2.400} />新增标注</AddNote>
        <NoteRow>
          <GripVertical size={10} /><Space $w={3} />标注1<Space $w={4} />
          <PaintBucket size={8} fill="#9a9da5" /><Space $w={11} />
          <svg width="9" height="9" viewBox="0 0 9 9"><path d="M0 0h9v9H0z" fill="#8d9098" /><path d="M2.300 2.500h4.400M4.500 2.500v4.500" stroke="#343745" strokeWidth="1.200" /></svg>
          <Space $w={27} />维度：利润额-201908<Space $w={14} />
          <Eye size={11} /><Space $w={12} /><Trash2 size={10} /><Space $w={7} /><PencilLine size={10} />
        </NoteRow>
        <Hint><Info size={8} />标注中含有相同阈值，将向上覆盖，可拖拽改变优先级</Hint>
      </Group>
    </Side>
  );
}

function LinkDialog() {
  return (
    <Dialog role="dialog">
      <DialogHead>
        <DialogTitle>图表联动设置</DialogTitle>
        <Label $w={34}>已选择:</Label>
        <Strong $w={119}>YTD成本利润监控</Strong>
        <Label $w={35.500}>数据集:</Label>
        <svg width="8" height="8" viewBox="0 0 8 8">
          <path d="M4 0l3.600 1.700L4 3.400.400 1.700zM.200 2.500L3.600 4v4L.200 6.300zM7.800 2.500L4.400 4v4l3.400-1.700z" fill="#a271d8" />
        </svg>
        <Space $w={4.500} />
        <Strong $w={322}>Demo_订单信息明细表</Strong>
        <X size={11} color="#999" strokeWidth={1.800} style={{ marginTop: 2 }} />
      </DialogHead>
      <DialogBody>
        <Fields>
          <FieldsHead>请选择需要绑定的字段<AddDot><Plus size={6} strokeWidth={4} /></AddDot></FieldsHead>
          <Field>
            <FieldPill>
              <Calendar size={9} color="#b5cdf5" />日期(年月日)(month)
            </FieldPill>
            <ChevronDown size={9} color="#bbb" />
            <Space $w={16} />
            <Trash2 size={9} color="#777" />
          </Field>
        </Fields>
        <Picker>
          <Tabs>
            <Tab $w={36} $ml={9}>关联图表</Tab>
            <Tab $w={57} $ml={49} $on>同数据集</Tab>
            <Tab $w={44} $ml={33} $dark>非同数据集</Tab>
          </Tabs>
          <Summary>同数据集（已关联1个图表，共6个图表）</Summary>
          <AllRow><Choice $h={22}><Check />全选</Choice></AllRow>
          <Options>
            {CHOICES.map((c, i) => (
              <Choice key={i}>
                <Check $on={c.on}>
                  {c.on && <svg width="8" height="8" viewBox="0 0 8 8"><path d="M1.200 4l2 2L7 2" fill="none" stroke="#fff" strokeWidth="1.500" /></svg>}
                </Check>
                <Glyph kind={c.kind} />
                {c.name}
              </Choice>
            ))}
          </Options>
        </Picker>
      </DialogBody>
      <DialogFoot>
        如联动维度已配置钻取，点击时将
        <Radio $ml={4.500} /><Muted>同时生效</Muted>
        <Radio $ml={0.500} $on /><Muted>浮层选择联动或钻取</Muted>
        <Info size={10} color="#777" />
        <Button>取 消</Button>
        <Button $primary>确 定</Button>
      </DialogFoot>
    </Dialog>
  );
}

export default function App() {
  return (
    <>
      <Global />
      <Shell>
        <Header />
        <Body>
          <Workspace>
            <Tools />
            <Dashboard />
          </Workspace>
          <DesignPanel />
        </Body>
      </Shell>
      <LinkDialog />
    </>
  );
}
